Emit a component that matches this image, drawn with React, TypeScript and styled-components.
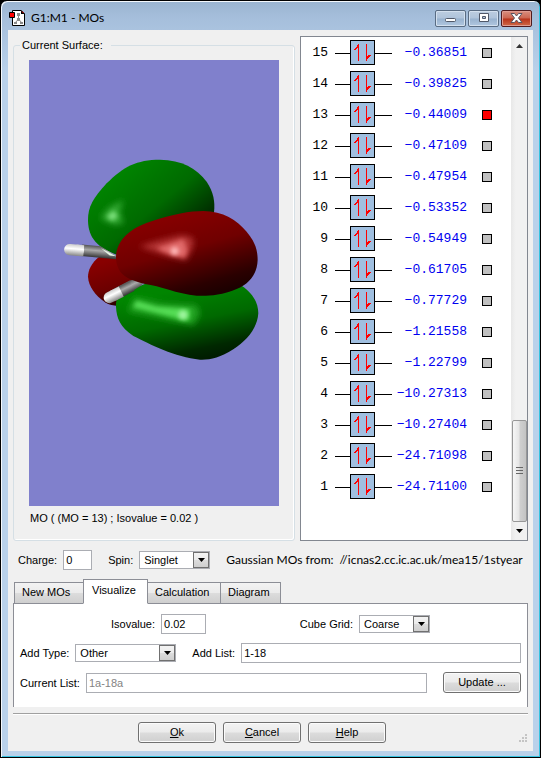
import React, { useState } from 'react';
import styled, { createGlobalStyle, css } from 'styled-components';

const GlobalStyle = createGlobalStyle`
  *, *::before, *::after { box-sizing: border-box; }
  body {
    margin: 0;
    background: #000;
    color: #000;
    font: 11px/14px "Liberation Sans", Arial, sans-serif;
  }
  button, input, select { font: inherit; color: inherit; margin: 0; }
`;

const face = 'linear-gradient(#f3f3f3 0%, #ebebeb 48%, #dcdcdc 52%, #cfcfcf 100%)';

const WindowFrame = styled.div`
  display: flex;
  flex-direction: column;
  min-height: 100vh;
  padding: 0 6px 6px;
  border: 1px solid #000;
  border-radius: 7px 7px 0 0;
  background: linear-gradient(#9ab4d0 0, #a5bedb 16px, #b9d1ea 70px);
  box-shadow: inset 1px 1px 0 #f4f8fc, inset -1px -1px 0 #35c3e0;
`;

const TitleBar = styled.header`
  display: flex;
  align-items: center;
  height: 29px;
  padding: 5px 2px 0 2px;
  gap: 5px;
`;

const Title = styled.h1`
  flex: 1;
  margin: 0;
  font: 12px/16px Lato, "Open Sans", sans-serif;
`;

const CaptionButtons = styled.div`
  display: flex;
  gap: 2px;
`;

const CaptionButton = styled.button<{ $close?: boolean }>`
  display: flex;
  align-items: center;
  justify-content: center;
  width: 31px;
  height: 17px;
  padding: 0;
  border: 1px solid ${p => (p.$close ? '#4f1a1e' : '#596c83')};
  border-radius: 2px;
  box-shadow: inset 0 0 0 1px ${p => (p.$close ? '#df9c91' : '#d3e0ee')};
  background: ${p =>
    p.$close
      ? 'linear-gradient(#d98f80 0%, #cb6550 48%, #b8321a 52%, #cf6a48 100%)'
      : 'linear-gradient(#bccde0 0%, #afc3da 48%, #98b2ce 52%, #b0c7e0 100%)'};
`;

const Client = styled.main`
  flex: 1;
  display: flex;
  flex-direction: column;
  margin: 0 1px;
  padding: 6px 5px 7px;
  background: #f0f0f0;
`;

const Upper = styled.div`
  display: flex;
  gap: 5px;
`;

const Group = styled.fieldset`
  flex: 1;
  min-width: 0;
  margin: 2px 0 0;
  padding: 8px 15px 14px;
  border: 1px solid #d5dfe5;
  border-radius: 3px;
  box-shadow: inset -1px -1px 0 #fff;
`;

const Legend = styled.legend`
  margin-left: -9px;
  padding: 0 8px 0 2px;
`;

const Surface = styled.svg`
  display: block;
  width: 100%;
  height: 446px;
  background: #8080cc;
`;

const Caption = styled.p`
  margin: 5px 0 0 1px;
`;

const ListPanel = styled.section`
  display: flex;
  width: 228px;
  height: 505px;
  border: 1px solid #828790;
  background: #fff;
`;

const Orbitals = styled.ol`
  flex: 1;
  margin: 0;
  padding: 0 19px 0 0;
  list-style: none;
`;

const Orbital = styled.li`
  display: grid;
  grid-template-columns: 27px 57px 1fr 10px;
  column-gap: 7px;
  align-items: center;
  height: 31px;
  font: 13px/16px "Liberation Mono", "Courier New", monospace;
  text-align: right;

  svg { display: block; }
`;

const Energy = styled.span`
  padding-right: 8px;
  margin-left: -14px;
  color: #0000f0;
`;

const Marker = styled.input`
  appearance: none;
  width: 10px;
  height: 10px;
  margin: 0;
  border: 1px solid #000;
  background: #c0c0c0;

  &:checked { background: #f00; }
`;

const ScrollTrack = styled.div`
  display: flex;
  flex-direction: column;
  align-items: center;
  width: 16px;
  background: linear-gradient(90deg, #e8e8e8, #f1f1f1 30%, #f1f1f1);
`;

const ScrollArrow = styled.button`
  display: flex;
  align-items: center;
  justify-content: center;
  width: 15px;
  height: 18px;
  padding: 0;
  border: 0;
  background: transparent;
`;

const ScrollThumb = styled.div`
  display: flex;
  align-items: center;
  justify-content: center;
  width: 15px;
  height: 102px;
  margin-top: auto;
  border: 1px solid #979797;
  border-radius: 2px;
  background: linear-gradient(90deg, #f6f6f6, #e6e6e6 45%, #cfcfcf 55%, #c3c3c3);
`;

const Row = styled.div`
  display: flex;
  align-items: center;
  gap: 16px;
`;

const StatusRow = styled(Row)`
  height: 20px;
  margin: 9px 0 9px;
  padding-left: 5px;
`;

const Field = styled.label<{ $grow?: boolean }>`
  display: flex;
  align-items: center;
  gap: 6px;
  white-space: nowrap;
  ${p => p.$grow && css`flex: 1; min-width: 0;`}
`;

const TextBox = styled.input<{ $width?: number }>`
  height: 20px;
  padding: 0 2px;
  border: 1px solid #abadb3;
  background: #fff;
  min-width: 0;
  ${p => (p.$width ? css`width: ${p.$width}px;` : css`flex: 1;`)}

  &:disabled { color: #838383; }
`;

const SelectWrap = styled.span<{ $width: number }>`
  position: relative;
  display: flex;
  width: ${p => p.$width}px;
`;

const SelectBox = styled.select`
  appearance: none;
  width: 100%;
  height: 18px;
  padding: 0 18px 1px 4px;
  border: 1px solid #abadb3;
  border-radius: 0;
  background: #fff;
`;

const DropMark = styled.span`
  position: absolute;
  top: 1px;
  right: 1px;
  bottom: 1px;
  display: flex;
  align-items: center;
  justify-content: center;
  width: 16px;
  border: 1px solid #707070;
  background: ${face};
  pointer-events: none;
`;

const Source = styled.span`
  font: 12px/16px Lato, "Open Sans", sans-serif;
  white-space: nowrap;

  b { margin-left: 3px; font-weight: 400; }
`;

const TabList = styled.div`
  display: flex;
  align-items: flex-end;
  height: 25px;
  margin-left: 1px;
`;

const Tab = styled.button<{ $width: number; $active: boolean }>`
  width: ${p => p.$width}px;
  height: 22px;
  padding: 0 0 2px 7px;
  border: 1px solid #8c8e96;
  margin-right: -1px;
  background: ${face};
  text-align: left;
  ${p =>
    p.$active &&
    css`
      position: relative;
      height: 25px;
      padding: 0 0 3px 8px;
      border-bottom-color: #fff;
      background: #fff;
    `}
`;

const TabPanel = styled.section`
  display: flex;
  flex-direction: column;
  gap: 9px;
  margin-top: -1px;
  padding: 10px 6px 14px;
  border: 1px solid #8c8e96;
  border-bottom: 0;
  background: #fff;
`;

const ValueRow = styled(Row)`
  justify-content: space-between;
  height: 20px;
  padding: 0 91px;
`;

const PushButton = styled.button`
  width: 78px;
  height: 21px;
  padding: 0 0 1px;
  border: 1px solid #707070;
  border-radius: 3px;
  box-shadow: inset 0 0 0 1px #fbfbfb;
  background: ${face};
`;

const Footer = styled.footer`
  display: flex;
  align-items: center;
  margin-top: 6px;
  padding-top: 8px;
  border-top: 1px solid #a0a0a0;
  box-shadow: inset 0 1px 0 #fff;
`;

const FooterButtons = styled.div`
  flex: 1;
  display: flex;
  justify-content: center;
  gap: 7px;
  padding-right: 8px;
`;

const Grip = styled.svg`
  align-self: flex-end;
`;

const orbitals: [number, string][] = [
  [15, '−0.36851'], [14, '−0.39825'], [13, '−0.44009'], [12, '−0.47109'],
  [11, '−0.47954'], [10, '−0.53352'], [9, '−0.54949'], [8, '−0.61705'],
  [7, '−0.77729'], [6, '−1.21558'], [5, '−1.22799'], [4, '−10.27313'],
  [3, '−10.27404'], [2, '−24.71098'], [1, '−24.71100'],
];

const tabs: [string, number][] = [
  ['New MOs', 70], ['Visualize', 65], ['Calculation', 74], ['Diagram', 61],
];

function AppIcon() {
  return (
    <svg width="17" height="17" viewBox="0 0 17 17" aria-hidden="true">
      <path d="M3.500.5H12L15.500 4V15.500H3.500Z" fill="#fff" stroke="#000" />
      <path d="M12 0v4h4z" fill="#000" />
      <path d="M13 1.500 14.500 3" stroke="#f00" />
      <path d="M9.500 4.500V9L6 13M9.500 9l3.500 4" stroke="#888" fill="none" />
      <path d="M8 3h3v3H8zM8 8h3v3H8zM5 12h3v2H5zM11 12h3v2h-3z" fill="#8a8a8a" />
      <path d="M.5 2.500h5v5h-5z" fill="#f00" stroke="#000" />
    </svg>
  );
}

function ElectronPair() {
  return (
    <svg width="57" height="26" viewBox="0 0 57 26" aria-hidden="true">
      <path d="M0 13.500H57" stroke="#000" />
      <rect x="15.500" y=".5" width="24" height="24" fill="#a0bfe0" stroke="#000" />
      <path d="M23.500 21V4M31.500 4V21" stroke="#f00" />
      <path d="M24 4v4h-2v1h-1v1h-2V9h1V8h1V7h1V5h1V4zM31 21v-5h2v-1h3v1h-1v1h-1v1h-1v1h-1v2z" fill="#f00" />
    </svg>
  );
}

function Arrow({ up = false }: { up?: boolean }) {
  return (
    <svg width="7" height="4" viewBox="0 0 7 4" aria-hidden="true">
      <path d={up ? 'M0 4 3.500 0 7 4z' : 'M0 0h7L3.500 4z'} fill={up ? '#333' : '#000'} />
    </svg>
  );
}

function OrbitalSurface() {
  return (
    <Surface viewBox="0 0 250 446" role="img" aria-label="Molecular orbital 13">
      <defs>
        <linearGradient id="greenTop" x1=".25" y1=".15" x2=".9" y2=".75">
          <stop offset="0" stopColor="#008300" />
          <stop offset=".5" stopColor="#006a00" />
          <stop offset="1" stopColor="#001f00" />
        </linearGradient>
        <linearGradient id="greenLow" x1=".4" y1=".1" x2=".72" y2=".95">
          <stop offset="0" stopColor="#008500" />
          <stop offset=".45" stopColor="#006900" />
          <stop offset=".85" stopColor="#002800" />
          <stop offset="1" stopColor="#001c00" />
        </linearGradient>
        <linearGradient id="redFront" x1=".35" y1=".1" x2=".75" y2=".95">
          <stop offset="0" stopColor="#850000" />
          <stop offset=".4" stopColor="#700000" />
          <stop offset=".85" stopColor="#2a0000" />
          <stop offset="1" stopColor="#1c0000" />
        </linearGradient>
        <linearGradient id="redBack" x1=".3" y1=".1" x2=".6" y2="1">
          <stop offset="0" stopColor="#880000" />
          <stop offset=".6" stopColor="#6c0000" />
          <stop offset="1" stopColor="#250000" />
        </linearGradient>
        <linearGradient id="bond" x1="0" y1="0" x2="0" y2="1">
          <stop offset="0" stopColor="#555" />
          <stop offset=".4" stopColor="#aaa" />
          <stop offset="1" stopColor="#333" />
        </linearGradient>
        <linearGradient id="hydrogen" x1="0" y1="0" x2="0" y2="1">
          <stop offset="0" stopColor="#ccc" />
          <stop offset=".4" stopColor="#fff" />
          <stop offset="1" stopColor="#888" />
        </linearGradient>
        <filter id="soft" x="-50%" y="-50%" width="200%" height="200%">
          <feGaussianBlur stdDeviation="9" />
        </filter>
        <filter id="glow" x="-50%" y="-50%" width="200%" height="200%">
          <feGaussianBlur stdDeviation="7" />
        </filter>
      </defs>
      <g transform="translate(31 80) scale(.3333)">
        <path d="M118 350C94 368 84 392 84 410C86 440 105 465 135 487Q150 497 168 497L240 440 200 350Z" fill="url(#redBack)" />
        <path d="M84 240C84 200 100 173 140 130C190 80 230 59 300 59C365 60 410 85 440 125C460 155 466 185 462 217L400 330 175 346C115 325 84 295 84 240Z" fill="url(#greenTop)" />
        <path d="M122 235 145 205 190 180 178 215 190 250 160 253Z" fill="#36ab36" filter="url(#soft)" />
        <path d="M140 230 160 212 174 228 157 243Z" fill="#7be07b" filter="url(#glow)" />
        <path d="M168 500C167 485 170 475 185 460L260 430 545 437C580 460 595 490 595 520C592 565 560 602 520 628C480 654 450 660 420 659C345 651 270 613 220 588C180 560 170 535 168 500Z" fill="url(#greenLow)" />
        <path d="M204 514 222 472 305 490 409 495 420 520 400 554 340 542Z" fill="#22a322" filter="url(#soft)" />
        <path d="M219 501 230 482 290 500 390 508 385 542 340 532Z" fill="#55dd55" filter="url(#glow)" />
        <circle cx="369" cy="525" r="14" fill="#a0f5a0" filter="url(#glow)" />
        <g transform="rotate(5 90 335)">
          <path d="M65 316H120L170 341V351L65 350Z" fill="url(#bond)" />
          <path d="M122 322 150 334 170 342 150 341Z" fill="#e4f5e4" />
          <rect x="12" y="317" width="60" height="34" rx="17" fill="url(#hydrogen)" />
          <rect x="48" y="317" width="23" height="34" fill="url(#hydrogen)" />
        </g>
        <g transform="rotate(-26 147 473)">
          <path d="M170 455 225 454 278 468 250 483 170 490Z" fill="url(#bond)" />
          <path d="M183 456H225V488L183 489Z" fill="url(#bond)" />
          <rect x="131" y="456" width="52" height="34" rx="17" fill="url(#hydrogen)" />
          <rect x="160" y="456" width="28" height="34" fill="url(#hydrogen)" />
        </g>
        <path d="M168 350C170 300 210 265 270 245C340 222 390 213 430 213C490 214 530 240 560 275C590 310 593 340 593 360C592 400 570 430 530 447C480 468 440 468 410 467C350 462 300 437 255 432C215 422 185 410 175 385C169 370 168 360 168 350Z" fill="url(#redFront)" />
        <path d="M238 319 305 300 365 286 400 294 397 324 378 360 325 347Z" fill="#b53434" filter="url(#soft)" />
        <path d="M290 325 370 298 382 330 374 353 320 339Z" fill="#e06868" filter="url(#glow)" />
        <circle cx="344" cy="333" r="12" fill="#ffb8b8" filter="url(#glow)" />
      </g>
    </Surface>
  );
}

function Select({ width, options }: { width: number; options: string[] }) {
  return (
    <SelectWrap $width={width}>
      <SelectBox>
        {options.map(o => <option key={o}>{o}</option>)}
      </SelectBox>
      <DropMark><Arrow /></DropMark>
    </SelectWrap>
  );
}

export default function App() {
  const [active, setActive] = useState('Visualize');
  return (
    <>
      <GlobalStyle />
      <WindowFrame>
        <TitleBar>
          <AppIcon />
          <Title>G1:M1 - MOs</Title>
          <CaptionButtons>
            <CaptionButton aria-label="Minimize">
              <svg width="12" height="9" viewBox="0 0 12 9"><rect x=".5" y="4.500" width="10" height="3" rx="1" fill="#fff" stroke="#505868" /></svg>
            </CaptionButton>
            <CaptionButton aria-label="Maximize">
              <svg width="12" height="10" viewBox="0 0 12 10"><path d="M1.500.5h9v8h-9zM4.500 3.500v2h3v-2z" fill="#fff" fillRule="evenodd" stroke="#505868" /></svg>
            </CaptionButton>
            <CaptionButton aria-label="Close" $close>
              <svg width="13" height="10" viewBox="0 0 13 10"><path d="M1 .5h3.500l2 2.500 2-2.500H12L8.500 5l3.500 4.500H8.500l-2-2.500-2 2.500H1L4.500 5z" fill="#fff" stroke="#5a5560" /></svg>
            </CaptionButton>
          </CaptionButtons>
        </TitleBar>
        <Client>
          <Upper>
            <Group>
              <Legend>Current Surface:</Legend>
              <OrbitalSurface />
              <Caption>MO ( (MO = 13) ; Isovalue = 0.02 )</Caption>
            </Group>
            <ListPanel aria-label="Orbital energies">
              <Orbitals>
                {orbitals.map(([n, energy]) => (
                  <Orbital key={n}>
                    <span>{n}</span>
                    <ElectronPair />
                    <Energy>{energy}</Energy>
                    <Marker type="checkbox" aria-label={`Orbital ${n}`} defaultChecked={n === 13} />
                  </Orbital>
                ))}
              </Orbitals>
              <ScrollTrack>
                <ScrollArrow aria-label="Scroll up"><Arrow up /></ScrollArrow>
                <ScrollThumb>
                  <svg width="7" height="8" viewBox="0 0 7 8" aria-hidden="true"><path d="M0 .5h7M0 3.500h7M0 6.500h7" stroke="#666" /></svg>
                </ScrollThumb>
                <ScrollArrow aria-label="Scroll down"><Arrow /></ScrollArrow>
              </ScrollTrack>
            </ListPanel>
          </Upper>
          <StatusRow>
            <Field>Charge:<TextBox $width={29} defaultValue="0" /></Field>
            <Field>Spin:<Select width={71} options={['Singlet', 'Triplet']} /></Field>
            <Source>Gaussian MOs from: <b>//icnas2.cc.ic.ac.uk/mea15/1styear</b></Source>
          </StatusRow>
          <TabList role="tablist">
            {tabs.map(([name, width]) => (
              <Tab key={name} role="tab" aria-selected={active === name} $width={width} $active={active === name} onClick={() => setActive(name)}>
                {name}
              </Tab>
            ))}
          </TabList>
          <TabPanel role="tabpanel">
            <ValueRow>
              <Field>Isovalue:<TextBox $width={45} defaultValue="0.02" /></Field>
              <Field>Cube Grid:<Select width={71} options={['Coarse', 'Medium', 'Fine']} /></Field>
            </ValueRow>
            <Row>
              <Field>Add Type:<Select width={101} options={['Other', 'All', 'Occupied']} /></Field>
              <Field $grow>Add List:<TextBox defaultValue="1-18" /></Field>
            </Row>
            <Row>
              <Field $grow>Current List:<TextBox disabled defaultValue="1a-18a" /></Field>
              <PushButton>Update ...</PushButton>
            </Row>
          </TabPanel>
          <Footer>
            <FooterButtons>
              <PushButton><u>O</u>k</PushButton>
              <PushButton><u>C</u>ancel</PushButton>
              <PushButton><u>H</u>elp</PushButton>
            </FooterButtons>
            <Grip width="9" height="9" viewBox="0 0 9 9" aria-hidden="true">
              <path d="M6 0h2v2H6zM3 3h2v2H3zM6 3h2v2H6zM0 6h2v2H0zM3 6h2v2H3zM6 6h2v2H6z" fill="#c4c4c4" />
            </Grip>
          </Footer>
        </Client>
      </WindowFrame>
    </>
  );
}
